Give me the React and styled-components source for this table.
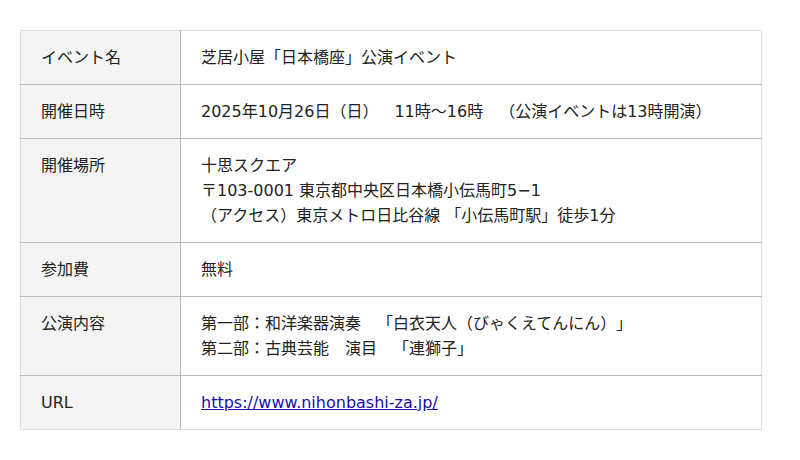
import React from "react";
import styled, { createGlobalStyle } from "styled-components";

const GlobalStyle = createGlobalStyle`
  body {
    margin: 0;
    background: #fff;
    font-family: "DejaVu Sans", "Noto Sans CJK JP", sans-serif;
    color: #222;
    text-spacing-trim: space-all;
  }
`;

const Page = styled.div`
  padding: 30px 38px 0 20px;
`;

const Table = styled.table`
  width: 742px;
  border-collapse: collapse;
  border: 1px solid #ddd;
  font-size: 16px;
  line-height: 25px;
`;

const Row = styled.tr`
  border-top: 1px solid #bbb;
  &:first-child {
    border-top: none;
  }
`;

const Label = styled.th`
  width: 119px;
  padding: 14px 20px 14px 20px;
  background: #f4f4f4;
  border-right: 1px solid #bbb;
  font-weight: normal;
  text-align: left;
  vertical-align: top;
`;

const Value = styled.td`
  padding: 14px 20px;
  vertical-align: top;
`;

const Link = styled.a`
  color: #1a0dab;
  text-decoration: underline;
`;

const rows = [
  { label: "イベント名", lines: ["芝居小屋「日本橋座」公演イベント"] },
  {
    label: "開催日時",
    lines: ["2025年10月26日（日）　11時～16時　（公演イベントは13時開演）"],
  },
  {
    label: "開催場所",
    lines: [
      "十思スクエア",
      "〒103-0001 東京都中央区日本橋小伝馬町5−1",
      "（アクセス）東京メトロ日比谷線 「小伝馬町駅」徒歩1分",
    ],
  },
  { label: "参加費", lines: ["無料"] },
  {
    label: "公演内容",
    lines: [
      "第一部：和洋楽器演奏　「白衣天人（びゃくえてんにん）」",
      "第二部：古典芸能　演目　「連獅子」",
    ],
  },
];

export default function App() {
  return (
    <>
      <GlobalStyle />
      <Page>
        <Table>
          <tbody>
            {rows.map((r) => (
              <Row key={r.label}>
                <Label>{r.label}</Label>
                <Value>
                  {r.lines.map((l, i) => (
                    <div key={i}>{l}</div>
                  ))}
                </Value>
              </Row>
            ))}
            <Row>
              <Label>URL</Label>
              <Value>
                <Link href="https://www.nihonbashi-za.jp/">
                  https://www.nihonbashi-za.jp/
                </Link>
              </Value>
            </Row>
          </tbody>
        </Table>
      </Page>
    </>
  );
}
